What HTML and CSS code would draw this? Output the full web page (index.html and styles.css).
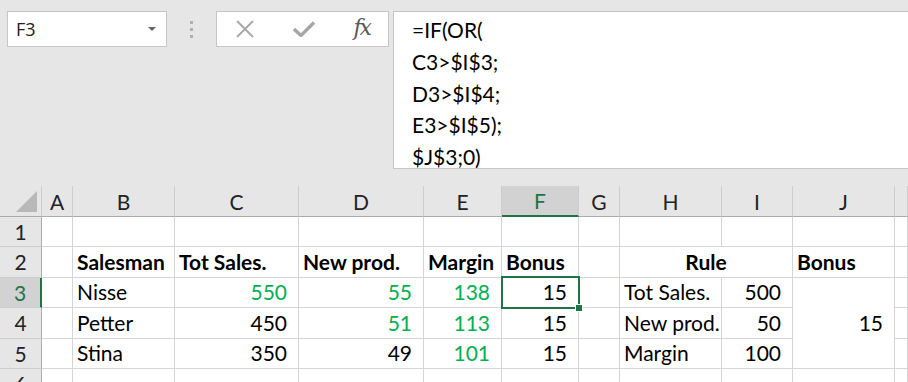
FILE: index.html
```html
<!DOCTYPE html>
<html lang="en">
<head>
    <meta charset="UTF-8">
    <meta name="viewport" content="width=device-width, initial-scale=1.0">
    <title>Salesman bonus</title>
    <link rel="stylesheet" href="styles.css">
</head>
<body>
    <div class="toolbar">
        <div class="namebox">
            <span>F3</span>
            <span class="caret"></span>
        </div>
        <div class="grip"><i></i><i></i><i></i></div>
        <div class="buttons">
            <svg class="icon" width="18" height="18" viewBox="0 0 18 18">
                <path d="M1 1 L17 17 M17 1 L1 17" stroke="#a6a6a6" stroke-width="1.8" fill="none"/>
            </svg>
            <svg class="icon" width="22" height="16" viewBox="0 0 22 16">
                <path d="M1 8 L8 14.5 L21 1.5" stroke="#a6a6a6" stroke-width="3.4" fill="none"/>
            </svg>
            <span class="fx">fx</span>
        </div>
        <div class="formula">
            =IF(OR(<br>
            C3&gt;$I$3;<br>
            D3&gt;$I$4;<br>
            E3&gt;$I$5);<br>
            $J$3;0)
        </div>
    </div>

    <table class="sheet">
        <colgroup>
            <col class="w-hdr">
            <col class="w-a">
            <col class="w-b">
            <col class="w-c">
            <col class="w-d">
            <col class="w-e">
            <col class="w-f">
            <col class="w-g">
            <col class="w-h">
            <col class="w-i">
            <col class="w-j">
            <col>
        </colgroup>
        <thead>
            <tr class="r31">
                <th class="corner"><span class="tri"></span></th>
                <th>A</th><th>B</th><th>C</th><th>D</th><th>E</th>
                <th class="sel-col">F</th>
                <th>G</th><th>H</th><th>I</th><th>J</th><th></th>
            </tr>
        </thead>
        <tbody>
            <tr class="r30">
                <th>1</th>
                <td></td><td></td><td></td><td></td><td></td><td></td><td></td><td></td><td></td><td></td><td></td>
            </tr>
            <tr class="r31">
                <th>2</th>
                <td></td>
                <td class="b">Salesman</td>
                <td class="b">Tot Sales.</td>
                <td class="b">New prod.</td>
                <td class="b">Margin</td>
                <td class="b">Bonus</td>
                <td></td>
                <td class="b mid" colspan="2">Rule</td>
                <td class="b">Bonus</td>
                <td></td>
            </tr>
            <tr class="r30">
                <th class="sel-row">3</th>
                <td></td>
                <td>Nisse</td>
                <td class="n green">550</td>
                <td class="n green">55</td>
                <td class="n green">138</td>
                <td class="n active">15<span class="handle"></span></td>
                <td></td>
                <td>Tot Sales.</td>
                <td class="n">500</td>
                <td class="n merged" rowspan="3">15</td>
                <td></td>
            </tr>
            <tr class="r31">
                <th>4</th>
                <td></td>
                <td>Petter</td>
                <td class="n">450</td>
                <td class="n green">51</td>
                <td class="n green">113</td>
                <td class="n">15</td>
                <td></td>
                <td class="clip">New prod.</td>
                <td class="n">50</td>
                <td></td>
            </tr>
            <tr class="r30">
                <th>5</th>
                <td></td>
                <td>Stina</td>
                <td class="n">350</td>
                <td class="n">49</td>
                <td class="n green">101</td>
                <td class="n">15</td>
                <td></td>
                <td>Margin</td>
                <td class="n">100</td>
                <td></td>
            </tr>
            <tr class="r30">
                <th>6</th>
                <td></td><td></td><td></td><td></td><td></td><td></td><td></td><td></td><td></td><td></td><td></td>
            </tr>
        </tbody>
    </table>
</body>
</html>
```

FILE: styles.css
```css
body {
    margin: 0;
    background-color: #e6e6e6;
    font-family: Lato, "Open Sans", sans-serif;
    color: #000;
    overflow: hidden;
}

/* formula bar */
.toolbar {
    display: flex;
    align-items: flex-start;
    height: 186px;
    padding: 11px 0 0 7px;
    box-sizing: border-box;
}
.namebox {
    width: 160px;
    height: 36px;
    box-sizing: border-box;
    border: 1px solid #c6c6c6;
    background-color: #fff;
    display: flex;
    align-items: center;
    justify-content: space-between;
    padding: 0 10px 0 8px;
    font-family: "Open Sans", sans-serif;
    font-size: 18px;
    color: #222;
}
.caret {
    width: 0;
    height: 0;
    border-left: 4px solid transparent;
    border-right: 4px solid transparent;
    border-top: 4px solid #666;
}
.grip {
    width: 49px;
    height: 36px;
    display: flex;
    flex-direction: column;
    align-items: center;
    justify-content: center;
    gap: 4px;
}
.grip i {
    display: block;
    width: 3px;
    height: 3px;
    background-color: #b0b0b0;
}
.buttons {
    width: 173px;
    height: 36px;
    box-sizing: border-box;
    border: 1px solid #c6c6c6;
    background-color: #fff;
    display: flex;
    align-items: center;
    padding: 0 18px 0 19px;
    justify-content: space-between;
}
.fx {
    font-family: "DejaVu Serif", serif;
    font-style: italic;
    font-size: 22px;
    color: #595959;
    letter-spacing: -2px;
    margin-top: -3px;
}
.formula {
    flex: 1;
    margin-left: 4px;
    height: 158px;
    box-sizing: border-box;
    border: 1px solid #c6c6c6;
    border-right: none;
    background-color: #fff;
    padding: 2px 0 0 18px;
    font-size: 21px;
    line-height: 31.75px;
}

/* sheet */
.sheet {
    border-collapse: separate;
    border-spacing: 0;
    table-layout: fixed;
    width: 908px;
    font-size: 21px;
}
.w-hdr { width: 42px; }
.w-a { width: 31px; }
.w-b { width: 102px; }
.w-c { width: 124px; }
.w-d { width: 125px; }
.w-e { width: 78px; }
.w-f { width: 77px; }
.w-g { width: 41px; }
.w-h { width: 102px; }
.w-i { width: 71px; }
.w-j { width: 102px; }
.r30 { height: 30px; }
.r31 { height: 31px; }

.sheet th {
    font-weight: normal;
    background-color: #e6e6e6;
    border-right: 1px solid #cdcdcd;
    border-bottom: 1px solid #cdcdcd;
    text-align: center;
    color: #222;
    padding: 0;
    line-height: 26px;
}
.sheet thead th {
    border-bottom-color: #ababab;
    vertical-align: bottom;
    padding-bottom: 1px;
}
.sheet tbody th {
    border-right-color: #ababab;
}
.sheet th.corner {
    position: relative;
}
.tri {
    position: absolute;
    right: 4px;
    bottom: 4px;
    width: 0;
    height: 0;
    border-left: 21px solid transparent;
    border-bottom: 21px solid #b8b8b8;
}
.sheet th.sel-col {
    background-color: #d2d2d2;
    color: #217346;
    border-bottom: 2px solid #217346;
}
.sheet th.sel-row {
    background-color: #d2d2d2;
    color: #217346;
    border-right: 2px solid #217346;
}

.sheet td {
    background-color: #fff;
    border-right: 1px solid #d4d4d4;
    border-bottom: 1px solid #d4d4d4;
    padding: 0 4px 2px 4px;
    vertical-align: bottom;
    white-space: nowrap;
    overflow: visible;
    line-height: 26px;
}
.sheet td.b { font-weight: bold; }
.sheet td.n {
    text-align: right;
    padding-right: 11px;
}
.sheet td.mid {
    text-align: center;
    padding-left: 0;
    padding-right: 0;
}
.sheet td.green { color: #00b050; }
.sheet td.clip {
    overflow: hidden;
    text-overflow: clip;
    padding-right: 0;
}
.sheet td.merged {
    vertical-align: middle;
    padding-bottom: 0;
}
.sheet td.active {
    position: relative;
}
.sheet td.active::after {
    content: "";
    position: absolute;
    left: -1px;
    top: -2px;
    right: -2px;
    bottom: -2px;
    border: 2px solid #217346;
}
.handle {
    position: absolute;
    right: -5px;
    bottom: -5px;
    width: 6px;
    height: 6px;
    background-color: #217346;
    border: 1px solid #fff;
    z-index: 1;
}
```
